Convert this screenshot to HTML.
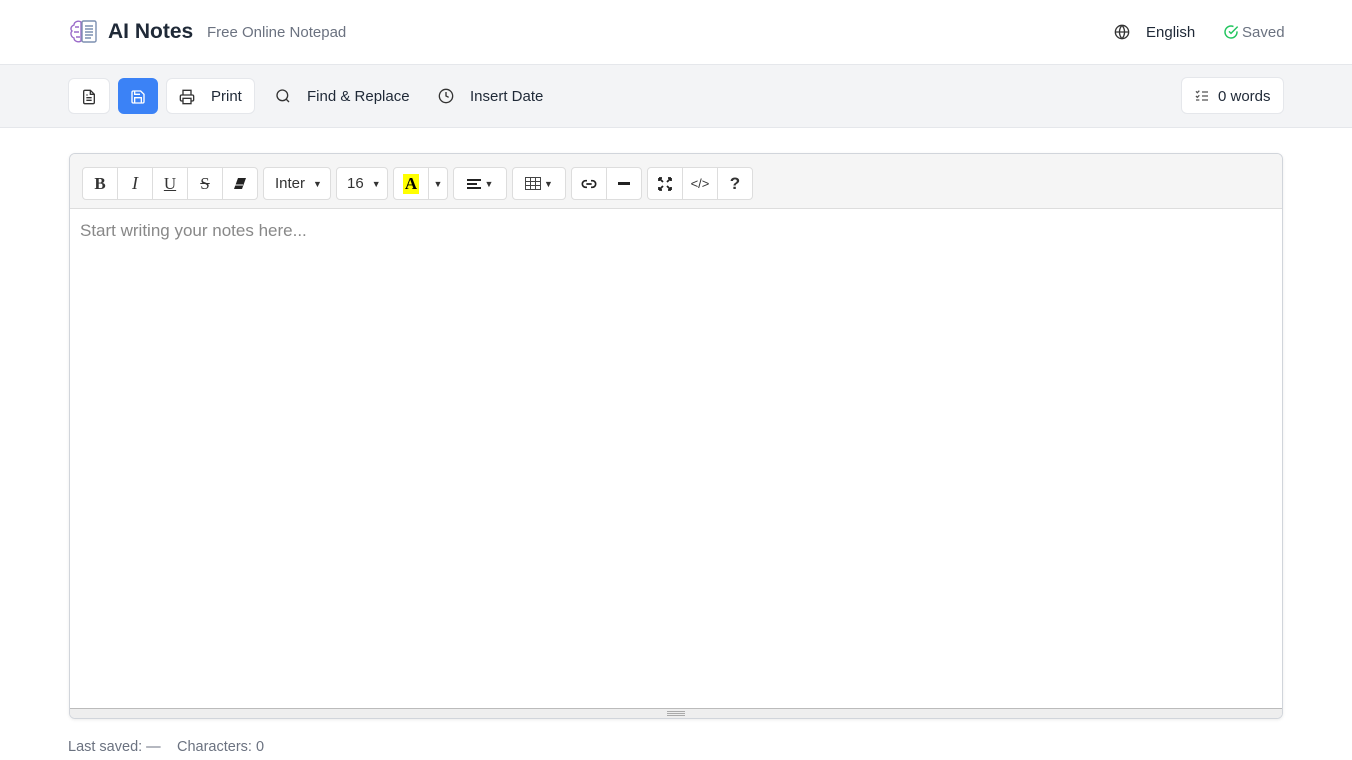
<!DOCTYPE html>
<html><head><meta charset="utf-8"><style>
*{box-sizing:border-box;margin:0;padding:0}
body{width:1352px;height:760px;background:#fff;font-family:"Liberation Sans",sans-serif;position:relative;overflow:hidden;color:#1f2937}
.abs{position:absolute}
.hdr{left:0;top:0;width:1352px;height:65px;border-bottom:1px solid #e5e7eb;background:#fff}
.bar{left:0;top:65px;width:1352px;height:63px;background:#f3f4f6;border-bottom:1px solid #e5e7eb}
.btn{position:absolute;top:13px;height:36px;border:1px solid #e5e7eb;border-radius:6px;background:#fff;display:flex;align-items:center;font-size:15px;color:#1f2937;padding-top:1px}
.t{position:absolute;font-size:15px;color:#1f2937}
.card{left:69px;top:153px;width:1214px;height:566px;border:1px solid #d1d5db;border-radius:6px;overflow:hidden;box-shadow:0 1px 3px rgba(0,0,0,.08)}
.etb{position:absolute;left:0;top:0;width:100%;height:55px;background:#f5f5f5;border-bottom:1px solid #ddd}
.eb{position:absolute;top:13px;height:33px;border:1px solid #ddd;background:#fff;display:flex;align-items:center;justify-content:center;font-size:15px;color:#333}
.g{border-radius:4px}
</style></head><body>
<div class="abs hdr">
 <svg class="abs" style="left:69px;top:18px" width="30" height="28" viewBox="0 0 30 28" fill="none" stroke="#9b6bc9" stroke-width="1.4"><path d="M12 4c-3-2-7 0-7 3-3 1-4 4-2 6-2 2-1 6 2 7 0 3 4 5 7 3z"/><path d="M6 9h4M5 14h5M7 19h4"/><rect x="13" y="3" width="14" height="21" rx="1.5" stroke="#7c8fb0"/><path d="M16 8h8M16 11h8M16 14h8M16 17h8M16 20h6" stroke="#7c8fb0"/></svg>
 <div class="abs" style="left:108px;top:20px;font-size:21px;font-weight:bold;color:#1f2937">AI Notes</div>
 <div class="abs" style="left:207px;top:24px;font-size:15px;color:#6b7280">Free Online Notepad</div>
 <svg class="abs" style="left:1114px;top:24px" width="16" height="16" viewBox="0 0 24 24" fill="none" stroke="#333" stroke-width="2"><circle cx="12" cy="12" r="10"/><path d="M2 12h20M12 2a15 15 0 0 1 0 20M12 2a15 15 0 0 0 0 20"/></svg>
 <div class="abs" style="left:1146px;top:24px;font-size:15px;color:#1f2937">English</div>
 <svg class="abs" style="left:1223px;top:24px" width="16" height="16" viewBox="0 0 24 24" fill="none" stroke="#22c55e" stroke-width="2.2"><path d="M21 11v1a9 9 0 1 1-5.3-8.2"/><path d="M22 4 12 14l-3-3"/></svg>
 <div class="abs" style="left:1242px;top:24px;font-size:15px;color:#6b7280">Saved</div>
</div>
<div class="abs bar">
 <div class="btn" style="left:68px;width:42px;justify-content:center"><svg width="16" height="16" viewBox="0 0 24 24" fill="none" stroke="#333" stroke-width="2"><path d="M14 2H6a2 2 0 0 0-2 2v16a2 2 0 0 0 2 2h12a2 2 0 0 0 2-2V8z"/><path d="M14 2v6h6M8 13h8M8 17h8M8 9h2"/></svg></div>
 <div class="btn" style="left:118px;width:40px;justify-content:center;background:#3b82f6;border-color:#3b82f6"><svg width="16" height="16" viewBox="0 0 24 24" fill="none" stroke="#fff" stroke-width="2"><path d="M19 21H5a2 2 0 0 1-2-2V5a2 2 0 0 1 2-2h11l5 5v11a2 2 0 0 1-2 2z"/><path d="M17 21v-8H7v8M7 3v5h8"/></svg></div>
 <div class="btn" style="left:166px;width:89px"><svg style="margin-left:12px" width="16" height="16" viewBox="0 0 24 24" fill="none" stroke="#333" stroke-width="2"><path d="M6 9V2h12v7M6 18H4a2 2 0 0 1-2-2v-5a2 2 0 0 1 2-2h16a2 2 0 0 1 2 2v5a2 2 0 0 1-2 2h-2"/><rect x="6" y="14" width="12" height="8"/></svg><span style="margin-left:16px">Print</span></div>
 <svg class="abs" style="left:275px;top:23px" width="16" height="16" viewBox="0 0 24 24" fill="none" stroke="#333" stroke-width="2"><circle cx="11" cy="11" r="8"/><path d="m21 21-4.3-4.3"/></svg>
 <div class="t" style="left:307px;top:23px">Find &amp; Replace</div>
 <svg class="abs" style="left:438px;top:23px" width="16" height="16" viewBox="0 0 24 24" fill="none" stroke="#333" stroke-width="2"><circle cx="12" cy="12" r="10"/><path d="M12 6v6l4 2"/></svg>
 <div class="t" style="left:470px;top:23px">Insert Date</div>
 <div class="btn" style="left:1181px;width:103px;top:12px;height:37px"><svg style="margin-left:12px" width="16" height="16" viewBox="0 0 24 24" fill="none" stroke="#555" stroke-width="2"><path d="m3 5 2 2 3-3M3 12l2 2 3-3M12 6h9M12 12h9M12 18h9M3 18h5"/></svg><span style="margin-left:8px">0 words</span></div>
</div>
<div class="abs card">
 <div class="etb">
  <div class="eb" style="left:12px;width:36px;border-radius:4px 0 0 4px;font-family:'Liberation Serif',serif;font-weight:bold;font-size:17px">B</div>
  <div class="eb" style="left:47px;width:36px;font-family:'Liberation Serif',serif;font-style:italic;font-size:18px">I</div>
  <div class="eb" style="left:82px;width:36px;font-family:'Liberation Serif',serif;text-decoration:underline;font-size:17px">U</div>
  <div class="eb" style="left:117px;width:36px;font-family:'Liberation Serif',serif;text-decoration:line-through;font-size:17px">S</div>
  <div class="eb" style="left:152px;width:36px;border-radius:0 4px 4px 0"><svg width="12" height="11" viewBox="0 0 12 11"><path d="M4 0h8L8 11H0z" fill="#222"/><path d="M1 7h8" stroke="#fff"/></svg></div>
  <div class="eb g" style="left:193px;width:68px;justify-content:flex-start;padding-left:11px">Inter <span style="font-size:9px;margin-left:8px">▼</span></div>
  <div class="eb g" style="left:266px;width:52px;justify-content:flex-start;padding-left:10px">16 <span style="font-size:9px;margin-left:8px">▼</span></div>
  <div class="eb" style="left:323px;width:36px;border-radius:4px 0 0 4px"><span style="background:#ff0;font-family:'Liberation Serif',serif;font-weight:bold;font-size:17px;padding:0 2px;color:#000">A</span></div>
  <div class="eb" style="left:358px;width:20px;border-radius:0 4px 4px 0;font-size:9px">▼</div>
  <div class="eb g" style="left:383px;width:54px"><svg width="14" height="10"><path d="M0 1h14M0 5h10M0 9h14" stroke="#222" stroke-width="2"/></svg><span style="font-size:9px;margin-left:4px">▼</span></div>
  <div class="eb g" style="left:442px;width:54px"><svg width="16" height="13" viewBox="0 0 16 13" fill="none" stroke="#444"><rect x=".5" y=".5" width="15" height="12"/><path d="M.5 4.5h15M.5 8.5h15M5.5 .5v12M10.5 .5v12"/></svg><span style="font-size:9px;margin-left:3px">▼</span></div>
  <div class="eb" style="left:501px;width:36px;border-radius:4px 0 0 4px"><svg width="16" height="16" viewBox="0 0 24 24" fill="none" stroke="#222" stroke-width="2.5"><path d="M9 17H7A5 5 0 0 1 7 7h2M15 7h2a5 5 0 1 1 0 10h-2M8 12h8"/></svg></div>
  <div class="eb" style="left:536px;width:36px;border-radius:0 4px 4px 0"><svg width="12" height="3"><rect width="12" height="3" fill="#222"/></svg></div>
  <div class="eb" style="left:577px;width:36px;border-radius:4px 0 0 4px"><svg width="14" height="14" viewBox="0 0 14 14" fill="none" stroke="#222" stroke-width="1.8"><path d="M1 1l4 4M13 1 9 5M1 13l4-4M13 13l-4-4M1 1h3M1 1v3M13 1h-3M13 1v3M1 13h3M1 13v-3M13 13h-3M13 13v-3"/></svg></div>
  <div class="eb" style="left:612px;width:36px;font-size:13px">&lt;/&gt;</div>
  <div class="eb" style="left:647px;width:36px;border-radius:0 4px 4px 0;font-weight:bold;font-size:17px">?</div>
 </div>
 <div class="abs" style="left:10px;top:67px;font-size:17px;color:#888">Start writing your notes here...</div>
 <div class="abs" style="left:0;bottom:0;width:100%;height:10px;background:#eee;border-top:1px solid #bbb"><div class="abs" style="left:597px;top:2px;width:18px;height:5px;border-top:1px solid #aaa;border-bottom:1px solid #aaa"></div><div class="abs" style="left:597px;top:4px;width:18px;height:1px;background:#aaa"></div></div>
</div>
<div class="abs" style="left:68px;top:739px;font-size:14.5px;color:#6b7280">Last saved: —</div>
<div class="abs" style="left:177px;top:739px;font-size:14.5px;color:#6b7280">Characters: 0</div>
</body></html>
